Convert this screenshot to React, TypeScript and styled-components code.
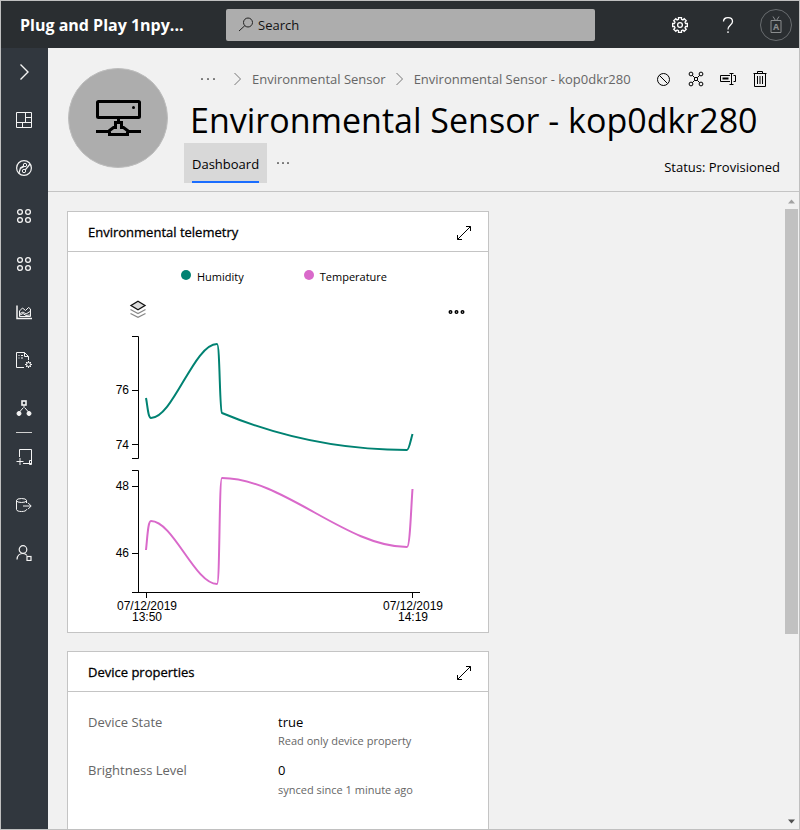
import React from "react";
import styled, { createGlobalStyle } from "styled-components";

const ui = `"Open Sans", "Noto Sans", sans-serif`;

const GlobalStyle = createGlobalStyle`
  *, *::before, *::after { box-sizing: border-box; }
  body { margin: 0; font-family: ${ui}; font-size: 13px; line-height: 20px; color: #000; background: #f1f1f1; }
  button { font: inherit; color: inherit; background: none; border: 0; padding: 0; cursor: pointer; }
  a { color: inherit; text-decoration: none; }
  svg { display: block; flex: none; }
`;

const Frame = styled.div`
  display: flex;
  flex-direction: column;
  height: 100vh;
  border: 1px solid #c0c0c0;
  overflow: hidden;
`;

const TopBar = styled.header`
  display: flex;
  align-items: center;
  flex: none;
  height: 47px;
  padding: 0 7px 0 19px;
  background: #2a2e31;
  color: #fff;
`;

const AppName = styled.div`
  flex: none;
  width: 206px;
  font-size: 16px;
  line-height: 24px;
  font-weight: 700;
  white-space: nowrap;
`;

const SearchBox = styled.label`
  display: flex;
  align-items: center;
  gap: 4px;
  flex: 0 1 369px;
  min-width: 0;
  height: 32px;
  padding: 0 12px;
  border-radius: 2px;
  background: #adadad;
  color: #222;
`;

const SearchInput = styled.input`
  flex: 1;
  min-width: 0;
  border: 0;
  padding: 0;
  background: transparent;
  font: inherit;
  color: #111;
  outline: none;
  &::placeholder { color: #111; opacity: 1; }
`;

const TopActions = styled.div`
  display: flex;
  align-items: center;
  margin-left: auto;
`;

const TopButton = styled.button`
  display: grid;
  place-items: center;
  width: 48px;
  height: 47px;
`;

const Account = styled.button`
  display: grid;
  place-items: center;
  width: 32px;
  height: 32px;
  margin-left: 8px;
  border: 1px solid #686c6f;
  border-radius: 50%;
  color: #8a8d8f;
`;

const Body = styled.div`
  display: flex;
  flex: 1;
  min-height: 0;
`;

const SideNav = styled.nav`
  flex: none;
  width: 47px;
  padding-right: 1px;
  background: #31373e;
  color: #f4f4f4;
`;

const NavButton = styled.button`
  display: grid;
  place-items: center;
  width: 100%;
  height: 48px;
`;

const NavDivider = styled.hr`
  width: 16px;
  height: 1px;
  margin: 0 auto;
  border: 0;
  background: #d0d0d0;
`;

const Main = styled.main`
  display: flex;
  flex-direction: column;
  flex: 1;
  min-width: 0;
`;

const PageHeader = styled.div`
  display: flex;
  gap: 16px;
  flex: none;
  padding: 20px 19px 8px 20px;
  border-bottom: 1px solid #c4c4c4;
`;

const DeviceImage = styled.div`
  display: grid;
  place-items: center;
  flex: none;
  width: 100px;
  height: 100px;
  border: 1px solid #bdbdbd;
  border-radius: 50%;
  background: #adadad;
`;

const HeaderText = styled.div`
  flex: 1;
  min-width: 0;
`;

const CrumbRow = styled.div`
  display: flex;
  align-items: center;
  justify-content: space-between;
  height: 22px;
  padding: 0 12px 0 16px;
`;

const Crumbs = styled.nav`
  display: flex;
  align-items: center;
  gap: 8px;
  color: #666;
  white-space: nowrap;
`;

const MoreCrumbs = styled.button`
  display: grid;
  place-items: center;
  width: 16px;
  height: 16px;
  margin-right: 8px;
`;

const Actions = styled.div`
  display: flex;
  gap: 16px;
`;

const IconButton = styled.button`
  display: grid;
  place-items: center;
  width: 16px;
  height: 16px;
`;

const Title = styled.h1`
  margin: 7px 0 0;
  padding-left: 6px;
  font-size: 34px;
  line-height: 46px;
  font-weight: 400;
  white-space: nowrap;
`;

const TabRow = styled.div`
  display: flex;
  align-items: center;
  height: 40px;
`;

const Tab = styled.button`
  height: 40px;
  padding: 0 8px;
  background: #d8d8d8;
  font-weight: 500;
`;

const TabLabel = styled.span`
  display: block;
  height: 39px;
  line-height: 40px;
  border-bottom: 2px solid #1a6dff;
`;

const MoreTabs = styled.button`
  display: grid;
  place-items: center;
  width: 16px;
  height: 16px;
  margin-left: 8px;
`;

const Status = styled.div`
  margin-left: auto;
  padding-top: 8px;
`;

const ScrollArea = styled.div`
  display: flex;
  flex: 1;
  min-height: 0;
`;

const Tiles = styled.div`
  display: grid;
  grid-template-columns: minmax(0, 422px);
  align-content: start;
  gap: 18px;
  flex: 1;
  min-width: 0;
  padding: 19px;
  overflow: auto;
  scrollbar-width: none;
`;

const ScrollTrack = styled.div`
  display: flex;
  flex-direction: column;
  align-items: center;
  flex: none;
  width: 15px;
  padding: 7px 1px 5px;
`;

const ScrollThumb = styled.div`
  width: 13px;
  height: 68%;
  margin: 5px 0 auto;
  background: #c1c1c1;
`;

const Card = styled.section`
  border: 1px solid #c4c4c4;
  background: #fff;
`;

const CardHeader = styled.div`
  display: flex;
  align-items: center;
  justify-content: space-between;
  height: 40px;
  padding: 0 16px 0 20px;
  border-bottom: 1px solid #c4c4c4;
`;

const CardTitle = styled.h2`
  margin: 0;
  font-size: 13px;
  line-height: 20px;
  font-weight: 500;
  -webkit-text-stroke: 0.3px currentColor;
`;

const Legend = styled.div`
  display: flex;
  justify-content: center;
  gap: 60px;
  padding: 15px 0 0 12px;
  font-size: 11px;
  line-height: 20px;
`;

const LegendItem = styled.div`
  display: flex;
  gap: 6px;
`;

const Swatch = styled.span<{ $color: string }>`
  width: 10px;
  height: 10px;
  margin-top: 3px;
  border-radius: 50%;
  background: ${(p) => p.$color};
`;

const ChartTools = styled.div`
  display: flex;
  align-items: center;
  justify-content: space-between;
  height: 44px;
  padding: 0 22px 0 60px;
`;

const ToolButton = styled.button`
  display: grid;
  place-items: center;
  width: 20px;
  height: 20px;
`;

const Chart = styled.svg`
  width: 100%;
  height: auto;
  font-family: "Liberation Sans", Arial, sans-serif;
  font-size: 12px;
`;

const Properties = styled.dl`
  display: grid;
  grid-template-columns: 190px 1fr;
  row-gap: 10px;
  margin: 0;
  padding: 20px 20px 48px;
`;

const PropName = styled.dt`
  color: #666;
`;

const PropValue = styled.dd`
  margin: 0;
`;

const PropNote = styled.div<{ $spaced?: boolean }>`
  margin-top: ${(p) => (p.$spaced ? 1 : 0)}px;
  font-size: 11px;
  line-height: 18px;
  color: #666;
`;

type IconProps = { size?: number; box?: number; w?: number; children: React.ReactNode };
const Icon = ({ size = 16, box = 16, w = 1, children }: IconProps) => (
  <svg width={size} height={size} viewBox={`0 0 ${box} ${box}`} fill="none" stroke="currentColor" strokeWidth={w} aria-hidden="true">
    {children}
  </svg>
);

const circles = (
  <>
    <circle cx="4" cy="4" r="2.400" strokeWidth="1.300" /><circle cx="12" cy="4" r="2.400" strokeWidth="1.300" />
    <circle cx="4" cy="12" r="2.400" strokeWidth="1.300" /><circle cx="12" cy="12" r="2.400" strokeWidth="1.300" />
  </>
);

const navTop = [
  { name: "Expand", icon: <path d="M4.5 .5 12 8l-7.5 7.5" strokeWidth="1.4" /> },
  { name: "Dashboard", icon: <path d="M.5 .5h15v15H.5zM9.5 .5v10M.5 10.5h15M9.5 5.5h6M6.500 10.5v5" /> },
  {
    name: "Devices",
    icon: (
      <>
        <circle cx="8" cy="8" r="7.400" strokeWidth="1.200" />
        <circle cx="9" cy="5" r="1.700" /><circle cx="8" cy="11" r="1.700" />
        <path d="M3 13 4.500 8l3-2M9.300 9.800 14 4M5 8.300l3-1.800" strokeWidth="1.200" />
      </>
    ),
  },
  { name: "Device sets", icon: circles },
  { name: "Device groups", icon: circles },
  {
    name: "Analytics",
    icon: (
      <>
        <path d="M1 1.500v13h15" strokeWidth="1.500" />
        <path d="M3.500 12.500V7l3-3 3 2.500 3-3 2 1.500v7.500zM4 9.500l3-1.500 3 2 4-2.500M4 11l3-1.500 3 2 4-.5" />
      </>
    ),
  },
  {
    name: "Jobs",
    icon: (
      <>
        <path d="M8 15.500H.5V.5h8l4 4V8M8.500 .5v4h4M2.500 3.500h1M5 3.500h2M2.500 6h1M5 6h2" />
        <circle cx="12.500" cy="12.500" r="2" />
        <path d="M12.500 9v1.500M12.500 14.500V16M9 12.500h1.500M14.500 12.500H16M10 10l1 1M14 14l1 1M10 15l1-1M14 11l1-1" />
      </>
    ),
  },
  {
    name: "Continuous rules",
    icon: (
      <>
        <rect x="6" y="1" width="4" height="4" strokeWidth="1.600" />
        <path d="M8 5.500v2.500M7 8l-3.500 4M9 8l3.500 4" />
        <circle cx="3" cy="13.500" r="2" fill="currentColor" /><circle cx="13" cy="13.500" r="2" fill="currentColor" />
      </>
    ),
  },
];

const navBottom = [
  { name: "Device templates", icon: <path d="M3.500 8V.5h12v14H7M.5 12.500h7M4 9v7M13.500 15.500v-4h2v4z" /> },
  {
    name: "Data export",
    icon: (
      <>
        <ellipse cx="5.500" cy="3.500" rx="5" ry="2" />
        <path d="M.5 3.500v9c0 2.700 10 2.700 10 0V12M10.500 3.500V6M7 9h8M12 5.800 15.200 9 12 12.200" />
      </>
    ),
  },
  {
    name: "Administration",
    icon: (
      <>
        <circle cx="7" cy="4.500" r="3.800" strokeWidth="1.200" />
        <path d="M1 14.500c.2-3.500 2.500-6 6-6 1.800 0 3.200.8 4 2" strokeWidth="1.200" />
        <rect x="11" y="11.500" width="4" height="4" strokeWidth="1.200" />
      </>
    ),
  },
];

const NavItems = ({ items }: { items: { name: string; icon: React.ReactNode }[] }) => (
  <>
    {items.map((it) => (
      <NavButton key={it.name} aria-label={it.name}>
        <Icon>{it.icon}</Icon>
      </NavButton>
    ))}
  </>
);

const gearPath = Array.from({ length: 8 })
  .flatMap((_, i) => {
    const base = (i * Math.PI) / 4;
    return [[-0.27, 5.8], [-0.2, 7.6], [0.2, 7.6], [0.27, 5.8]].map(
      ([a, r]) => `${(8 + r * Math.sin(base + a)).toFixed(1)} ${(8 - r * Math.cos(base + a)).toFixed(1)}`
    );
  })
  .join("L");

const Dots = ({ size = 16, color, step }: { size?: number; color: string; step: number }) => (
  <svg width={size} height={size} viewBox="0 0 16 16" fill={color} aria-hidden="true">
    {[-1, 0, 1].map((i) => (
      <rect key={i} x={7 + i * step} y="7" width="2" height="2" rx=".6" />
    ))}
  </svg>
);

const Separator = () => (
  <svg width="12" height="14" viewBox="0 0 12 14" fill="none" stroke="#777" aria-hidden="true">
    <path d="M2.500 1 8.500 7l-6 6" />
  </svg>
);

const ExpandButton = ({ label }: { label: string }) => (
  <IconButton aria-label={label}>
    <Icon><path d="M1.500 15.500l13-13M10 2.500h4.500V7M1.500 11v4.500H6" /></Icon>
  </IconButton>
);

const Telemetry = () => (
  <Chart viewBox="0 0 420 301" role="img" aria-label="Humidity and temperature over time">
    <g fill="none" stroke="#000">
      <path d="M64 5.500h6.500v122H64M64 59.500h6M64 113.500h6" />
      <path d="M64 139.500h6.500v122M64 155.500h6M64 222.500h6M64 261.500h288M78.500 262v5M344.500 262v5" />
    </g>
    <g textAnchor="end">
      <text x="61" y="63">76</text>
      <text x="61" y="118">74</text>
      <text x="61" y="159">48</text>
      <text x="61" y="226">46</text>
    </g>
    <g textAnchor="middle">
      <text x="79" y="279">07/12/2019</text>
      <text x="79" y="290">13:50</text>
      <text x="345" y="279">07/12/2019</text>
      <text x="345" y="290">14:19</text>
    </g>
    <g fill="none" strokeWidth="2">
      <path stroke="#008272" d="M78 67C79.500 74 80 87 83 87C105 87 126 13 149 13C152 13 151.500 80 154 82C214 107 276 119 339 119C341 119 342.500 110 344.500 103" />
      <path stroke="#d969ca" d="M78 219C79.500 205 80 190 83 190C105 190 127 253 149 253C152 253 151 147 154 147C215 147 278 216 339 216C342 216 343 178 344.500 158" />
    </g>
  </Chart>
);

export default function App() {
  return (
    <>
      <GlobalStyle />
      <Frame>
        <TopBar>
          <AppName>Plug and Play 1npy...</AppName>
          <SearchBox>
            <Icon><circle cx="10" cy="5.500" r="4.500" /><path d="M6.800 8.700 1 14" /></Icon>
            <SearchInput type="search" placeholder="Search" aria-label="Search" />
          </SearchBox>
          <TopActions>
            <TopButton aria-label="Settings">
              <Icon w={1.3}><path d={`M${gearPath}Z`} /><circle cx="8" cy="8" r="2.400" /></Icon>
            </TopButton>
            <TopButton aria-label="Help">
              <Icon w={1.3}><path d="M3.500 4.500C3.500 2 5.500 .7 8 .7s4.500 1.500 4.500 3.800C12.500 8 8 8 8 12.500M8 14.300V16" /></Icon>
            </TopButton>
            <Account aria-label="Account">
              <svg width="14" height="18" viewBox="0 0 14 18" fill="none" stroke="currentColor" aria-hidden="true">
                <path d="M2 4.500h10v12H2zM4 .5l2.500 4M10 .5l-2.500 4" />
                <text x="7" y="14" textAnchor="middle" fontSize="9" stroke="none" fill="currentColor" fontWeight="700">A</text>
              </svg>
            </Account>
          </TopActions>
        </TopBar>
        <Body>
          <SideNav aria-label="Main">
            <NavItems items={navTop} />
            <NavDivider />
            <NavItems items={navBottom} />
          </SideNav>
          <Main>
            <PageHeader>
              <DeviceImage>
                <svg width="46" height="36" viewBox="0 0 46 36" fill="none" stroke="#000" strokeWidth="3" aria-hidden="true">
                  <rect x="2.500" y="1.500" width="42" height="16" rx="1" />
                  <path d="M23.500 18v4M1 31.500h12M34 31.500h12" />
                  <path d="M20.500 22.500h6v5h2l4 3v4h-18v-4l4-3h2z" />
                  <circle cx="38.500" cy="7.500" r="1.500" fill="#000" stroke="none" />
                </svg>
              </DeviceImage>
              <HeaderText>
                <CrumbRow>
                  <Crumbs aria-label="Breadcrumb">
                    <MoreCrumbs aria-label="More levels"><Dots color="#777" step={6} /></MoreCrumbs>
                    <Separator />
                    <a href="#sensors">Environmental Sensor</a>
                    <Separator />
                    <a href="#device">Environmental Sensor - kop0dkr280</a>
                  </Crumbs>
                  <Actions>
                    <IconButton aria-label="Block">
                      <Icon><circle cx="7.500" cy="8.500" r="6" /><path d="M3.500 4.500l8 8" /></Icon>
                    </IconButton>
                    <IconButton aria-label="Associate">
                      <Icon>
                        <circle cx="3" cy="3" r="1.900" /><circle cx="13" cy="3" r="1.900" />
                        <circle cx="3" cy="13" r="1.900" /><circle cx="13" cy="13" r="1.900" />
                        <path d="M4.300 4.300l2 2M11.700 4.300l-2 2M4.300 11.700l2-2M11.700 11.700l-2-2M6.500 6.500h3v3h-3z" />
                      </Icon>
                    </IconButton>
                    <IconButton aria-label="Rename">
                      <Icon>
                        <path d="M10 4.500H.5v6H10M13.500 4.500h2v6h-2M9.500 2.500h4M9.500 13.500h4M11.500 3v10" />
                        <path d="M2.500 7.500h6" strokeWidth="2" />
                      </Icon>
                    </IconButton>
                    <IconButton aria-label="Delete">
                      <Icon><path d="M1.500 2.500h13M5.500 2.500V.5h5v2M2.500 2.500v13h11v-13M5.500 5v8M8 5v8M10.500 5v8" /></Icon>
                    </IconButton>
                  </Actions>
                </CrumbRow>
                <Title>Environmental Sensor - kop0dkr280</Title>
                <TabRow>
                  <Tab><TabLabel>Dashboard</TabLabel></Tab>
                  <MoreTabs aria-label="More tabs"><Dots color="#777" step={5} /></MoreTabs>
                  <Status>Status: Provisioned</Status>
                </TabRow>
              </HeaderText>
            </PageHeader>
            <ScrollArea>
              <Tiles>
                <Card>
                  <CardHeader>
                    <CardTitle>Environmental telemetry</CardTitle>
                    <ExpandButton label="Expand Environmental telemetry" />
                  </CardHeader>
                  <Legend>
                    <LegendItem><Swatch $color="#008272" />Humidity</LegendItem>
                    <LegendItem><Swatch $color="#d969ca" />Temperature</LegendItem>
                  </Legend>
                  <ChartTools>
                    <ToolButton aria-label="Stacking">
                      <Icon size={18} box={18}>
                        <path d="M1.500 9.500 9 13.500l7.500-4M1.500 13.500 9 17.300l7.500-3.800" stroke="#888" strokeWidth="1.300" />
                        <path d="M9 1.200 16 5.500 9 9.800 2 5.500z" fill="#ddd" stroke="#111" strokeWidth="1.300" />
                      </Icon>
                    </ToolButton>
                    <ToolButton aria-label="Chart options">
                      <Icon size={18} box={18} w={1.4}>
                        <circle cx="3.500" cy="12" r="1.300" /><circle cx="9.500" cy="12" r="1.300" /><circle cx="15.500" cy="12" r="1.300" />
                      </Icon>
                    </ToolButton>
                  </ChartTools>
                  <Telemetry />
                </Card>
                <Card>
                  <CardHeader>
                    <CardTitle>Device properties</CardTitle>
                    <ExpandButton label="Expand Device properties" />
                  </CardHeader>
                  <Properties>
                    <PropName>Device State</PropName>
                    <PropValue>true<PropNote>Read only device property</PropNote></PropValue>
                    <PropName>Brightness Level</PropName>
                    <PropValue>0<PropNote $spaced>synced since 1 minute ago</PropNote></PropValue>
                  </Properties>
                </Card>
              </Tiles>
              <ScrollTrack aria-hidden="true">
                <svg width="7" height="5" viewBox="0 0 7 5" fill="#a3a3a3"><path d="M0 4.500 3.500 .5 7 4.500z" /></svg>
                <ScrollThumb />
                <svg width="7" height="5" viewBox="0 0 7 5" fill="#505050"><path d="M0 .5h7L3.500 4.500z" /></svg>
              </ScrollTrack>
            </ScrollArea>
          </Main>
        </Body>
      </Frame>
    </>
  );
}
